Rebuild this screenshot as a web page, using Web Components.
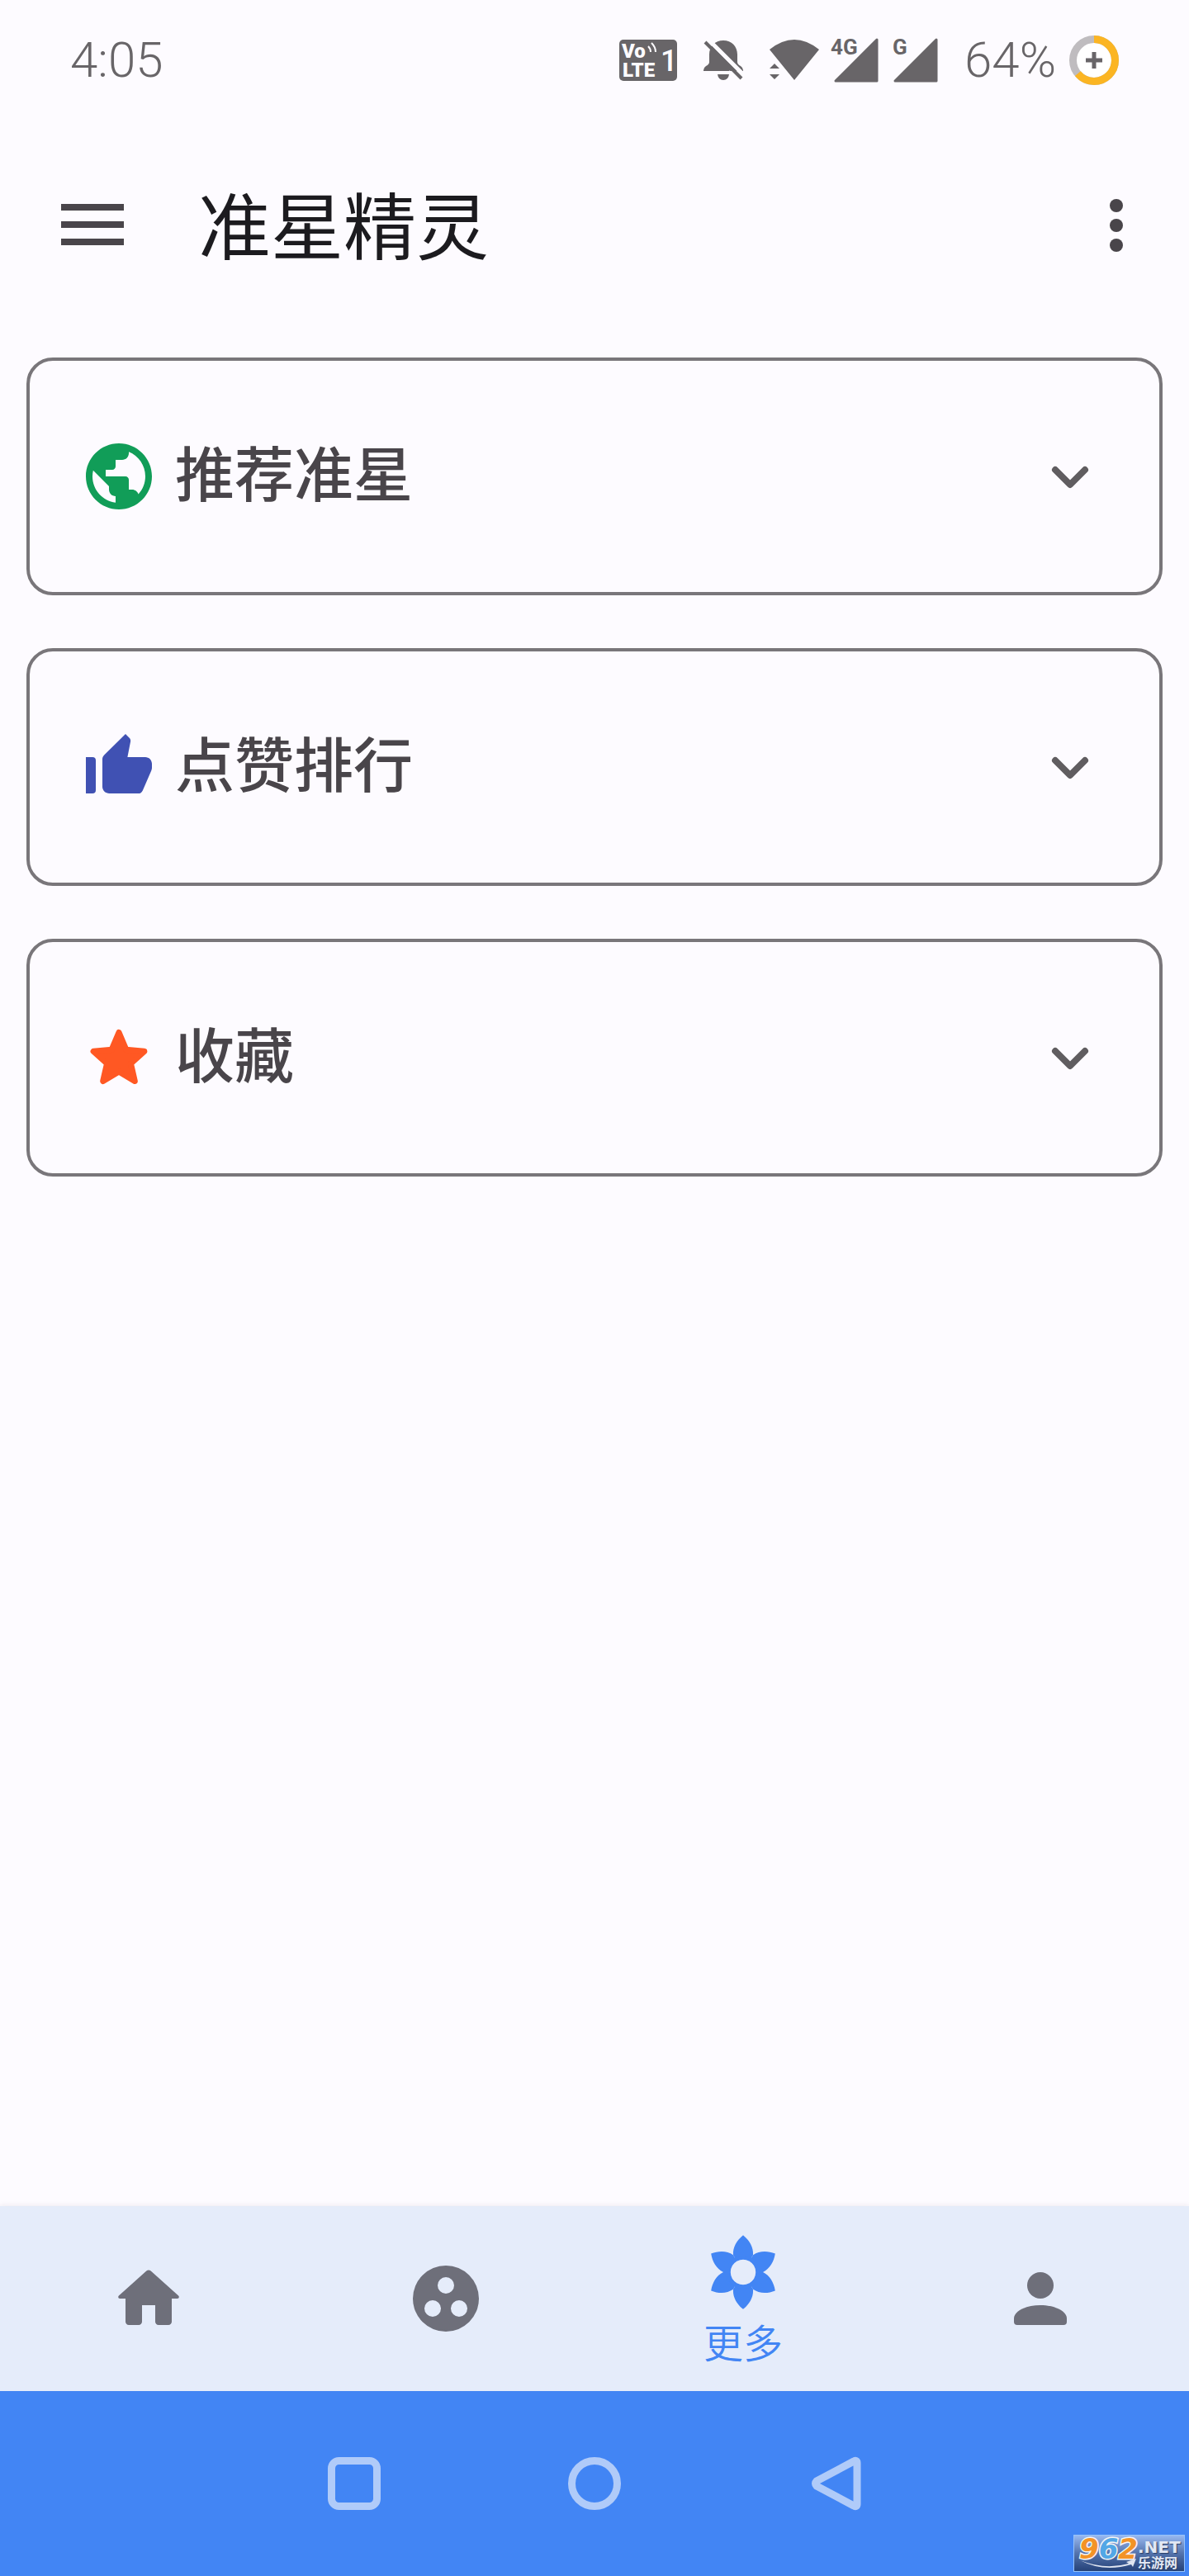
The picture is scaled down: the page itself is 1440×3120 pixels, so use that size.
<!DOCTYPE html>
<html lang="zh-CN">
<head>
<meta charset="utf-8">
<meta name="viewport" content="width=device-width, initial-scale=1">
<title>准星精灵</title>
<style>
  body {
    background-color: rgb(253, 251, 255);
    font-family: Roboto, "Noto Sans CJK SC", sans-serif;
    margin: 0;
  }
</style>
</head>
<body>
<phone-screen>
  <status-bar slot="top" time="4:05" battery="64"></status-bar>
  <app-bar slot="top">准星精灵</app-bar>

  <expand-card>
    <svg slot="icon" viewBox="0 0 24 24" fill="#119d58"><path d="M12 2C6.48 2 2 6.48 2 12s4.48 10 10 10 10-4.48 10-10S17.52 2 12 2zm-1 17.93c-3.95-.49-7-3.85-7-7.93 0-.62.08-1.21.21-1.79L9 15v1c0 1.1.9 2 2 2v1.93zm6.9-2.54c-.26-.81-1-1.39-1.9-1.39h-1v-3c0-.55-.45-1-1-1H8v-2h2c.55 0 1-.45 1-1V7h2c1.1 0 2-.9 2-2v-.41c2.93 1.19 5 4.06 5 7.41 0 2.08-.8 3.97-2.1 5.39z"/></svg>
    推荐准星
  </expand-card>
  <expand-card>
    <svg slot="icon" viewBox="0 0 24 24" fill="#4051b3"><path d="M2 9h2a1 1 0 0 1 1 1v9a1 1 0 0 1-1 1H2zM14 2l-6.4 6.3c-.4.4-.6.8-.6 1.3V18c0 1.1 1 2 2.1 2h8.8c.6 0 1-.3 1.3-.9l2.6-6c.1-.3.2-.5.2-.8V11c0-1.1-.9-2-2-2h-5.4l.9-4.6c.1-.4 0-.8-.2-1.1z"/></svg>
    点赞排行
  </expand-card>
  <expand-card>
    <svg slot="icon" viewBox="0 0 24 24" fill="#ff5823" stroke="#ff5823" stroke-width="1.8" stroke-linejoin="round"><path d="M12 4.4l2.2 5.2 5.5.5-4.1 3.7 1.2 5.3-4.8-2.9-4.8 2.9 1.2-5.3-4.1-3.7 5.5-.5z"/></svg>
    收藏
  </expand-card>

  <tab-bar slot="bottom">
    <tab-item name="主页">
      <svg slot="icon" viewBox="0 0 24 24"><path d="M10 19v-5h4v5c0 .55.45 1 1 1h3c.55 0 1-.45 1-1v-7h1.7c.46 0 .68-.57.33-.87L12.67 3.6c-.38-.34-.96-.34-1.34 0l-8.36 7.53c-.34.3-.13.87.33.87H5v7c0 .55.45 1 1 1h3c.55 0 1-.45 1-1z"/></svg>
    </tab-item>
    <tab-item name="社区">
      <svg slot="icon" viewBox="0 0 24 24"><path fill-rule="evenodd" d="M12 2a10 10 0 1 0 0 20 10 10 0 0 0 0-20zm0 3.500a2.500 2.500 0 1 1 0 5 2.500 2.500 0 0 1 0-5zM8 12.500a2.500 2.500 0 1 1 0 5 2.500 2.500 0 0 1 0-5zM16 12.500a2.500 2.500 0 1 1 0 5 2.500 2.500 0 0 1 0-5z"/></svg>
    </tab-item>
    <tab-item name="更多" active>
      <svg slot="icon" viewBox="-12 -12 24 24">
        <defs><path id="petal" d="M0-11.200C1.900-9.700 3.200-7.500 3-5.200L1.900-3.300A3.900 3.900 0 0 0-1.900-3.300L-3-5.200C-3.200-7.500-1.900-9.700 0-11.200z"/></defs>
        <use href="#petal"/>
        <use href="#petal" transform="rotate(60)"/>
        <use href="#petal" transform="rotate(120)"/>
        <use href="#petal" transform="rotate(180)"/>
        <use href="#petal" transform="rotate(240)"/>
        <use href="#petal" transform="rotate(300)"/>
        <circle r="4.500" fill="none" stroke="currentColor"/>
      </svg>
      更多
    </tab-item>
    <tab-item name="我的">
      <svg slot="icon" viewBox="0 0 24 24"><circle cx="12" cy="8" r="4"/><path d="M12 14c-4.400 0-8 1.800-8 4v1a1 1 0 0 0 1 1h14a1 1 0 0 0 1-1v-1c0-2.200-3.600-4-8-4z"/></svg>
    </tab-item>
  </tab-bar>
  <system-nav slot="bottom"></system-nav>
  <site-badge slot="bottom"></site-badge>
</phone-screen>

<script>
(function() {
  const define = (name, template, setup) => {
    customElements.define(name, class extends HTMLElement {
      constructor() {
        super();
        const shadowRoot = this.attachShadow({ mode: 'open' });
        shadowRoot.innerHTML = (typeof template === 'function' ? template(this) : template).trim();
        if (setup) setup(this, shadowRoot);
      }
    });
  };

  define('phone-screen', `
    <style>
      :host {
        display: flex;
        flex-direction: column;
        min-height: 100vh;
        position: relative;
      }

      main {
        display: flex;
        flex: 1;
        flex-direction: column;
        gap: 64px;
        padding: 31px 32px;
      }
    </style>

    <slot name="top"></slot>
    <main><slot></slot></main>
    <slot name="bottom"></slot>
  `);

  const signal = (label, x) => `
    <svg width="58" height="56" viewBox="0 0 58 56">
      <path d="M6 53L56 3v50z" stroke="currentColor" stroke-width="3" stroke-linejoin="round"/>
      <text x="${x}" y="21" font-size="26" font-weight="700">${label}</text>
    </svg>
  `;

  define('status-bar', (host) => `
    <style>
      :host {
        align-items: center;
        box-sizing: border-box;
        color: rgb(104, 101, 104);
        display: flex;
        font-size: 60px;
        font-weight: 300;
        height: 146px;
        justify-content: space-between;
        line-height: 64px;
        padding: 0 85px;
      }

      .icons, .radio, .battery {
        align-items: center;
        display: flex;
      }

      .icons { gap: 32px; }
      .radio { gap: 14px; }
      .battery { gap: 16px; }

      svg {
        display: block;
        fill: currentColor;
        font-family: Roboto, sans-serif;
        overflow: visible;
      }
    </style>

    <span>${host.getAttribute('time')}</span>
    <div class="icons">
      <svg width="70" height="50" viewBox="0 0 70 50">
        <rect width="70" height="50" rx="5"/>
        <g fill="#fdfbff" font-weight="900">
          <text x="3" y="22" font-size="24">Vo</text>
          <text x="4" y="45" font-size="24">LTE</text>
          <text x="50" y="38" font-size="36" font-weight="500">1</text>
        </g>
        <path d="M35 8q3 3 3 7M39 4q5 5 5 11" fill="none" stroke="#fdfbff" stroke-width="2"/>
      </svg>
      <svg width="48" height="48" viewBox="0 0 48 48">
        <path d="M24 0C14 0 7 7 7 17v9q0 3-4 5-3 2-3 5v1h48v-1q0-3-3-5-4-2-4-5v-9C41 7 34 0 24 0zM17 41h14q-1 7-7 7t-7-7z"/>
        <path d="M5 -2L50 43" stroke="#fdfbff" stroke-width="5"/>
        <path d="M2 2L46 46" stroke="currentColor" stroke-width="4"/>
        <path d="M31 37L42 48" stroke="#fdfbff" stroke-width="2"/>
      </svg>
      <div class="radio">
        <svg width="60" height="50" viewBox="0 0 60 50">
          <path d="M30 49L0 12Q30-12 60 12zM6 29l6 6H0zM0 42h12l-6 6z"/>
        </svg>
        ${signal('4G', 0)}
        ${signal('G', 3)}
      </div>
      <div class="battery">
        <span>${host.getAttribute('battery')}%</span>
        <svg width="60" height="60" viewBox="0 0 60 60">
          <circle cx="30" cy="30" r="25.500" fill="#fff" stroke="#bfbcbf" stroke-width="9"/>
          <circle cx="30" cy="30" r="25.500" fill="none" stroke="#fbb523" stroke-width="9" pathLength="100" stroke-dasharray="${host.getAttribute('battery')} 100" transform="rotate(-90 30 30)"/>
          <path d="M20 30h20M30 20v20" stroke="currentColor" stroke-width="5"/>
        </svg>
      </div>
    </div>
  `);

  define('app-bar', `
    <style>
      :host {
        align-items: center;
        box-sizing: border-box;
        color: rgb(73, 69, 74);
        display: flex;
        height: 256px;
        padding: 0 40px 0 64px;
      }

      button {
        background: none;
        border: 0;
        color: inherit;
        height: 96px;
        padding: 0;
        width: 96px;
      }

      svg {
        display: block;
        fill: currentColor;
      }

      h1 {
        color: rgb(28, 27, 31);
        flex: 1;
        font-size: 88px;
        font-weight: 400;
        line-height: 112px;
        margin: 0;
        padding: 6px 0 0 80px;
      }
    </style>

    <button aria-label="菜单">
      <svg width="96" height="96" viewBox="0 0 96 96"><path d="M10 21h76v8H10zM10 42h76v8H10zM10 63h76v8H10z"/></svg>
    </button>
    <h1><slot></slot></h1>
    <button aria-label="更多选项">
      <svg width="96" height="96" viewBox="0 0 96 96"><circle cx="48" cy="23" r="8"/><circle cx="48" cy="47" r="8"/><circle cx="48" cy="71" r="8"/></svg>
    </button>
  `);

  define('expand-card', `
    <style>
      :host { display: block; }

      button {
        align-items: center;
        background: none;
        border: 4px solid rgb(121, 118, 122);
        border-radius: 32px;
        color: rgb(73, 69, 74);
        display: flex;
        font: inherit;
        font-size: 72px;
        font-weight: 500;
        gap: 20px;
        height: 288px;
        line-height: 96px;
        padding: 0 60px;
        text-align: left;
        width: 100%;
      }

      ::slotted(svg) {
        display: block;
        height: 96px;
        width: 96px;
      }

      .label { flex: 1; }

      .arrow {
        fill: none;
        stroke: rgb(96, 93, 96);
        stroke-linecap: round;
        stroke-linejoin: round;
        stroke-width: 8px;
      }
    </style>

    <button aria-expanded="false">
      <slot name="icon"></slot>
      <span class="label"><slot></slot></span>
      <svg class="arrow" width="96" height="96" viewBox="0 0 96 96"><path d="M30 40l18 18 18-18"/></svg>
    </button>
  `, (host, root) => {
    const button = root.querySelector('button');
    button.addEventListener('click', () => {
      button.setAttribute('aria-expanded', button.getAttribute('aria-expanded') === 'false');
    });
  });

  define('tab-bar', `
    <style>
      :host {
        background-color: rgb(229, 236, 250);
        box-shadow: rgba(60, 40, 60, 0.08) 0 -1px 6px;
        display: block;
      }

      nav {
        display: grid;
        grid-template-columns: repeat(4, 1fr);
        height: 224px;
      }
    </style>

    <nav><slot></slot></nav>
  `);

  define('tab-item', (host) => `
    <style>
      :host {
        color: rgb(110, 111, 122);
        display: flex;
      }

      :host([active]) { color: rgb(66, 133, 244); }

      a {
        align-items: center;
        color: inherit;
        display: flex;
        flex: 1;
        flex-direction: column;
        font-size: 48px;
        font-weight: 350;
        gap: 16px;
        justify-content: center;
        line-height: 48px;
        text-decoration: none;
      }

      ::slotted(svg) {
        display: block;
        fill: currentColor;
        height: 96px;
        width: 96px;
      }
    </style>

    <a href="#" aria-label="${host.getAttribute('name')}"><slot name="icon"></slot><slot></slot></a>
  `);

  define('system-nav', `
    <style>
      :host {
        align-items: center;
        background-color: rgb(66, 133, 244);
        display: flex;
        gap: 195px;
        height: 224px;
        justify-content: center;
      }

      button {
        background: none;
        border: 0;
        padding: 0;
      }

      svg {
        display: block;
        fill: none;
        stroke: rgb(176, 203, 249);
        stroke-linejoin: round;
        stroke-width: 9px;
      }
    </style>

    <button aria-label="最近任务">
      <svg width="96" height="96" viewBox="0 0 96 96"><rect x="20.500" y="20.500" width="55" height="55" rx="9"/></svg>
    </button>
    <button aria-label="主屏幕">
      <svg width="96" height="96" viewBox="0 0 96 96"><circle cx="48" cy="48" r="27.500"/></svg>
    </button>
    <button aria-label="返回">
      <svg width="96" height="96" viewBox="0 0 96 96"><path d="M71 21c2-1.500 4-.500 4 2v50c0 2.500-2 3.500-4 2L26 51c-2-2-2-4 0-6z"/></svg>
    </button>
  `);

  // floats over the corner of the navigation bar
  define('site-badge', `
    <style>
      :host {
        background-image: linear-gradient(rgb(151, 184, 240), rgb(84, 115, 172) 50%, rgb(37, 66, 120));
        border: 1px solid rgb(150, 195, 250);
        bottom: 5px;
        box-sizing: border-box;
        color: rgb(226, 232, 244);
        display: flex;
        font-family: "DejaVu Sans", "Noto Sans CJK SC", sans-serif;
        font-weight: 700;
        height: 45px;
        padding-left: 6px;
        position: absolute;
        right: 5px;
        width: 135px;
      }

      .digits {
        color: rgb(243, 147, 38);
        font-size: 34px;
        font-style: italic;
        line-height: 32px;
        -webkit-text-stroke: 3px rgb(245, 245, 245);
        paint-order: stroke fill;
      }

      .blue { color: rgb(82, 167, 230); }

      .site {
        display: flex;
        flex-direction: column;
        font-size: 20px;
        line-height: 20px;
        padding-top: 4px;
        text-shadow: rgb(40, 60, 100) 1px 1px 1px;
      }

      .name {
        font-family: "Noto Sans CJK SC", sans-serif;
        font-size: 16px;
        line-height: 16px;
      }

      svg {
        bottom: 1px;
        left: 6px;
        position: absolute;
      }
    </style>

    <svg width="72" height="14" viewBox="0 0 72 14"><path d="M1 2q30 12 59 4l-3-2 12-4-4 10-2-3Q30 17 1 2z" fill="#dfe5f0"/></svg>
    <div class="digits">9<span class="blue">6</span>2</div>
    <div class="site"><span>.NET</span><span class="name">乐游网</span></div>
  `);
})();
</script>
</body>
</html>
